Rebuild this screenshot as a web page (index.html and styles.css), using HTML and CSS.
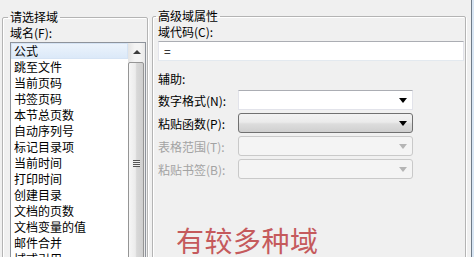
FILE: index.html
```html
<!DOCTYPE html>
<html lang="zh-CN">
<head>
    <meta charset="UTF-8">
    <title>域</title>
    <link rel="stylesheet" href="styles.css">
</head>
<body>
    <div class="dialog">
        <fieldset class="group group-left">
            <legend>请选择域</legend>
            <div class="field-label">域名(F):</div>
            <div class="listbox">
                <ul class="items">
                    <li class="selected">公式</li>
                    <li>跳至文件</li>
                    <li>当前页码</li>
                    <li>书签页码</li>
                    <li>本节总页数</li>
                    <li>自动序列号</li>
                    <li>标记目录项</li>
                    <li>当前时间</li>
                    <li>打印时间</li>
                    <li>创建目录</li>
                    <li>文档的页数</li>
                    <li>文档变量的值</li>
                    <li>邮件合并</li>
                    <li>域式引用</li>
                </ul>
                <div class="scrollbar">
                    <div class="scroll-up"><span class="tri-up"></span></div>
                    <div class="thumb">
                        <span class="grip"></span>
                    </div>
                </div>
            </div>
        </fieldset>

        <fieldset class="group group-right">
            <legend>高级域属性</legend>
            <div class="props">
                <div class="field-label">域代码(C):</div>
                <div class="textbox">=</div>

                <div class="field-label helper">辅助:</div>

                <div class="row">
                    <span class="row-label">数字格式(N):</span>
                    <div class="combo combo-edit"><span class="arrow"></span></div>
                </div>
                <div class="row">
                    <span class="row-label">粘贴函数(P):</span>
                    <div class="combo combo-button"><span class="arrow"></span></div>
                </div>
                <div class="row disabled">
                    <span class="row-label">表格范围(T):</span>
                    <div class="combo combo-off"><span class="arrow"></span></div>
                </div>
                <div class="row disabled">
                    <span class="row-label">粘贴书签(B):</span>
                    <div class="combo combo-off"><span class="arrow"></span></div>
                </div>

                <div class="note">有较多种域</div>
            </div>
        </fieldset>
    </div>
</body>
</html>
```

FILE: styles.css
```css
* {
    box-sizing: border-box;
}

body {
    margin: 0;
    height: 257px;
    overflow: hidden;
    background-color: #d9e6f3;
    font-family: "Noto Sans CJK SC", "Noto Sans", sans-serif;
    font-size: 12px;
    color: #000;
}

.dialog {
    display: flex;
    align-items: flex-start;
    gap: 4px;
    width: 472px;
    height: 257px;
    overflow: hidden;
    padding: 8px 0 0 2px;
    background-color: #f0f0f0;
    border-right: 1px solid #6f7b88;
}

.group {
    margin: 0;
    height: 290px;
    border: 1px solid #b4b4b4;
    border-radius: 2px;
    box-shadow: inset 1px 1px 0 #fff, 1px 1px 0 #fff;
}

legend {
    padding: 0 2px;
    line-height: 16px;
}

.group-left {
    width: 146px;
    margin-top: 1px;
    padding: 0 0 0 5px;
}

.group-right {
    width: 314px;
    padding: 0 0 0 3px;
}

.field-label {
    line-height: 16px;
    margin-left: 2px;
}

/* list of fields */
.listbox {
    display: flex;
    width: 136px;
    height: 240px;
    margin: 1px 0 0 2px;
    background-color: #fff;
    border: 1px solid #8e939b;
}

.items {
    flex: 1;
    list-style: none;
    margin: 0;
    padding: 0;
}

.items li {
    height: 16px;
    line-height: 16px;
    padding-left: 3px;
    white-space: nowrap;
}

.items li.selected {
    background: linear-gradient(#edf4fc, #dae8f8);
    box-shadow: inset 0 0 0 1px #d5e3f4;
}

.scrollbar {
    width: 17px;
    background: linear-gradient(90deg, #e4e4e4, #f4f4f4 40%, #f4f4f4 70%, #e8e8e8);
}

.scroll-up {
    height: 17px;
    display: flex;
    justify-content: center;
    align-items: center;
}

.tri-up {
    width: 0;
    height: 0;
    border-left: 4px solid transparent;
    border-right: 4px solid transparent;
    border-bottom: 4px solid #3c3c3c;
}

.thumb {
    height: 202px;
    margin: 2px 1px 0 0;
    display: flex;
    justify-content: center;
    align-items: center;
    border: 1px solid #959595;
    border-radius: 2px;
    background: linear-gradient(90deg, #f6f6f6, #ececec 45%, #d8d8d8 55%, #cfcfcf);
}

.grip {
    width: 7px;
    height: 7px;
    background: repeating-linear-gradient(#555 0 1px, #eee 1px 2px);
}

/* advanced properties */
.props {
    padding-left: 2px;
}

.props .field-label {
    margin-left: 0;
}

.textbox {
    width: 306px;
    height: 20px;
    margin-top: 1px;
    padding-left: 5px;
    line-height: 18px;
    background-color: #fff;
    border: 1px solid #e2e3ea;
    border-top-color: #abadb3;
    border-bottom-color: #e3e9ef;
}

.helper {
    margin-top: 10px;
}

.row {
    display: flex;
    align-items: center;
    height: 20px;
    margin-top: 3px;
}

.row-label {
    width: 80px;
    white-space: nowrap;
}

.row.disabled .row-label {
    color: #a3a3a3;
}

.combo {
    width: 175px;
    height: 20px;
    display: flex;
    justify-content: flex-end;
    align-items: center;
    padding-right: 5px;
}

.arrow {
    width: 0;
    height: 0;
    border-left: 4px solid transparent;
    border-right: 4px solid transparent;
    border-top: 5px solid #000;
}

.combo-edit {
    background-color: #fff;
    border: 1px solid #e2e3ea;
    border-top-color: #abadb3;
}

.combo-button {
    border: 1px solid #707070;
    border-radius: 3px;
    background: linear-gradient(#f2f2f2, #ebebeb 45%, #dddddd 55%, #cfcfcf);
}

.combo-off {
    border: 1px solid #c9c9c9;
    border-radius: 3px;
    background-color: #f4f4f4;
}

.combo-off .arrow {
    border-top-color: #b5b5b5;
}

.note {
    margin: 49px 0 0 18px;
    font-size: 28px;
    line-height: 24px;
    letter-spacing: 0.5px;
    color: #c55a5c;
}
```
